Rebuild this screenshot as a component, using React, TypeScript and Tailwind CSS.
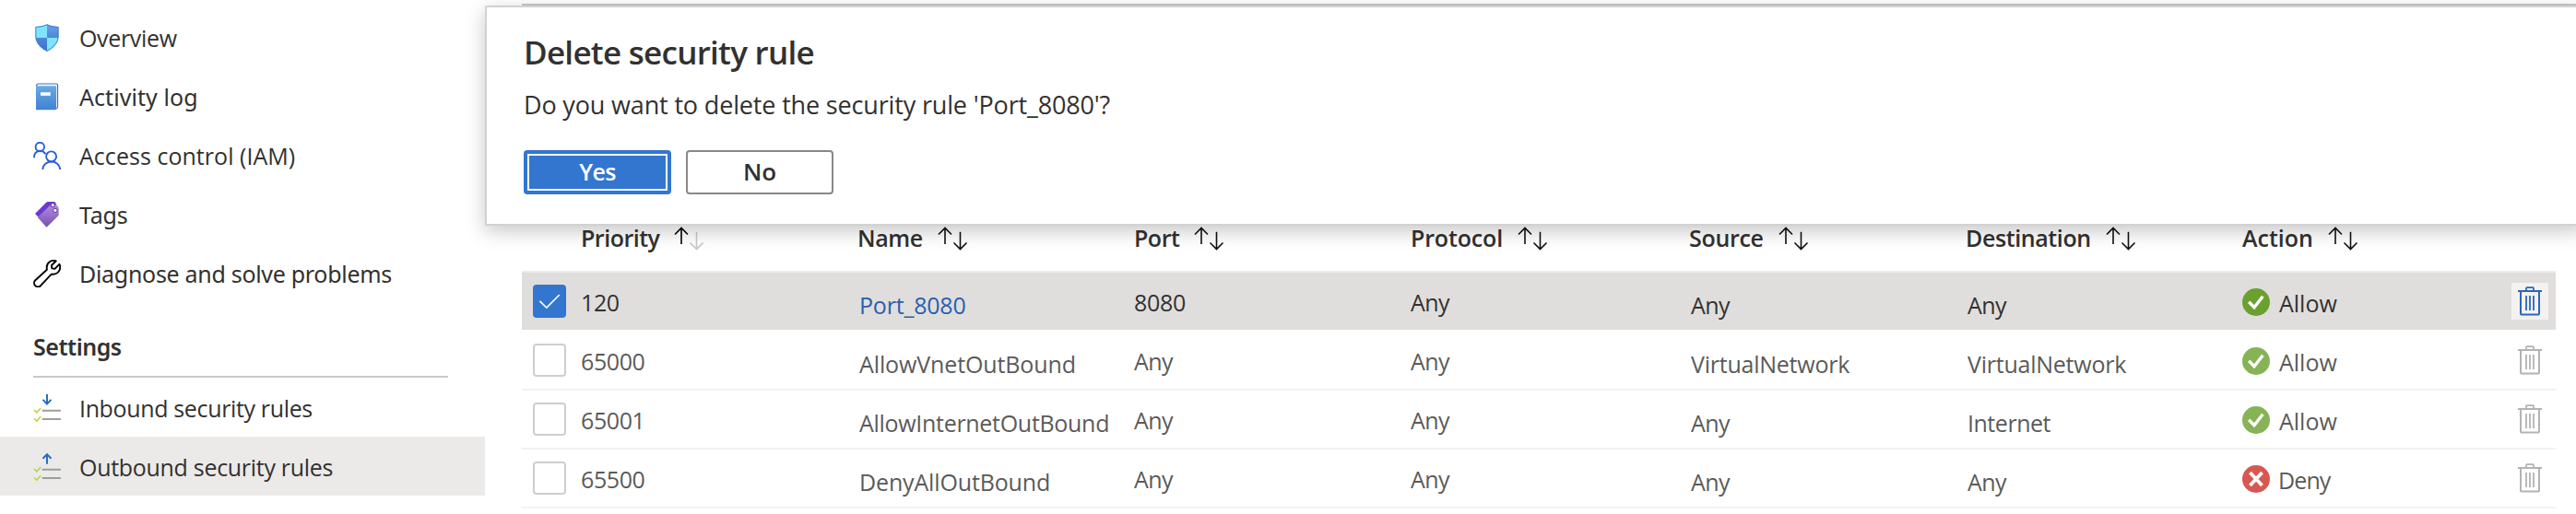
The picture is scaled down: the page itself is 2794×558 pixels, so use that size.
import type { ReactNode } from "react";

const OPEN = "font-['Open_Sans','Noto_Sans',sans-serif]";
const NOTO = "font-['Noto_Sans','Open_Sans',sans-serif]";

function ShieldIcon() {
  return (
    <svg width="30" height="30" viewBox="0 0 30 30">
      <defs>
        <linearGradient id="shieldBase" x1="0" y1="0" x2="0" y2="1">
          <stop offset="0" stopColor="#6f9fe8" />
          <stop offset="0.45" stopColor="#5089d8" />
          <stop offset="1" stopColor="#3572c8" />
        </linearGradient>
        <clipPath id="shieldClip">
          <path d="M15 .3C18.500 2.300 23.500 2.800 27.500 3V13.500C27.500 21.500 20.500 27 15 29.700 9.500 27 2.500 21.500 2.500 13.500V3C6.500 2.800 11.500 2.300 15 .3z" />
        </clipPath>
      </defs>
      <g clipPath="url(#shieldClip)">
        <rect width="30" height="30" fill="url(#shieldBase)" />
        <rect width="15" height="15" fill="#7fe3fc" />
        <rect x="15" y="15" width="15" height="15" fill="#7fe3fc" />
        <path
          d="M15 .3C18.500 2.300 23.500 2.800 27.500 3V13.500C27.500 21.500 20.500 27 15 29.700 9.500 27 2.500 21.500 2.500 13.500V3C6.500 2.800 11.500 2.300 15 .3z"
          fill="none"
          stroke="#3a7bd0"
          strokeWidth="1.600"
        />
      </g>
    </svg>
  );
}

function BookIcon() {
  return (
    <svg width="30" height="30" viewBox="0 0 30 30">
      <defs>
        <linearGradient id="bookCover" x1="0" y1="0" x2="0" y2="1">
          <stop offset="0" stopColor="#68abe8" />
          <stop offset="1" stopColor="#3f82d0" />
        </linearGradient>
      </defs>
      <path d="M3.500 3.500Q3.500 1 6 1H25.200Q26.500 1 26.500 2.200V26Q26.500 27.500 25 28" fill="#fff" stroke="#3f6fae" strokeWidth="1.200" />
      <path d="M3 3.200H24Q25 3.200 25 4.200V28Q25 29.300 23.700 29.300H3z" fill="url(#bookCover)" />
      <rect x="8" y="10.200" width="10.700" height="3.600" fill="#fff" />
    </svg>
  );
}

function PeopleIcon() {
  return (
    <svg width="30" height="30" viewBox="0 0 30 30" fill="none" stroke="#2b5fd9" strokeWidth="1.900">
      <circle cx="7.300" cy="5.500" r="4.700" />
      <path d="M1 17.200C1 8.500 10 8 13.500 13.200" />
      <circle cx="19.600" cy="15.900" r="5.500" />
      <path d="M10.300 30C10.800 18.700 28.700 18.700 29.200 30" />
    </svg>
  );
}

function TagsIcon() {
  return (
    <svg width="30" height="30" viewBox="0 0 30 30">
      <defs>
        <linearGradient id="tagFront" x1="0" y1="0" x2="0" y2="1">
          <stop offset="0" stopColor="#b48be0" />
          <stop offset="1" stopColor="#7450b0" />
        </linearGradient>
      </defs>
      <path d="M2 14 14.200 1.700Q15 1 16 1H22.500Q24 1 24.800 3L25 8 6 18z" fill="#6c39d2" />
      <path d="M4.800 18 18.500 4.700Q19.200 4 20.200 4.200L25.500 4.500Q27.600 6 27.700 8.500V14.800Q27.700 15.900 27 16.600L14.500 28.700z" fill="url(#tagFront)" />
      <circle cx="21.200" cy="4.700" r="2.100" fill="#fff" stroke="#4f2a94" strokeWidth="1" />
      <circle cx="23.900" cy="10.400" r="2.100" fill="#fff" stroke="#5d35a3" strokeWidth="1" />
    </svg>
  );
}

function WrenchIcon() {
  return (
    <svg width="30" height="30" viewBox="0 0 30 30" fill="none" stroke="#000" strokeWidth="1.900" strokeLinejoin="round">
      <path d="M24.800 1.300C19.500-.3 14.700 3.300 14.700 8.300 14.700 9.200 14.700 9.900 14.900 10.800L2.300 22.300A4.100 4.100 0 0 0 8 28.200L19.800 15.600C25.300 16.600 29.500 12.600 29.200 7.600Q29.200 6 28.400 4.800L23.700 9.700 20.300 9.400 20 6z" />
    </svg>
  );
}

function RulesIcon({ up }: { up?: boolean }) {
  return (
    <svg width="30" height="30" viewBox="0 0 30 30" fill="none">
      <path
        d={up ? "M15 11.700V1M10.500 5.800 15 1.200 19.500 5.800" : "M15 0V10.700M10.500 5.900 15 10.500 19.500 5.900"}
        stroke="#2b6cc4"
        strokeWidth="2"
      />
      <path d="M10.400 17.800H29.200M10.400 27.100H29.200" stroke="#9b9f9f" strokeWidth="2" strokeLinecap="round" />
      <path d="M1 17.200 3.900 19.900 8.200 15M1 26.500 3.900 29.200 8.200 24.300" stroke="#b9d545" strokeWidth="1.600" />
    </svg>
  );
}

function SortIcon({ active }: { active?: boolean }) {
  return (
    <svg width="34" height="26" viewBox="0 0 34 26" fill="none" strokeWidth="1.600" className="shrink-0">
      <path d="M24.500 5.800V24.500M17.500 17.500 24.500 24.500 31.500 17.500" stroke={active ? "#c8c8c8" : "#111"} />
      <path d="M8 19V1.500M1 8.500 8 1.500 15 8.500" stroke={active ? "#000" : "#111"} />
    </svg>
  );
}

function TrashIcon({ color }: { color: string }) {
  return (
    <svg width="26" height="32" viewBox="0 0 26 32" fill="none" stroke={color}>
      <path d="M0 5H26" strokeWidth="2" />
      <path d="M9 4.500V2Q9 1.200 9.800 1.200H16.200Q17 1.200 17 2V4.500" strokeWidth="1.800" />
      <path d="M3 5V29Q3 30.600 4.600 30.600H21.400Q23 30.600 23 29V5" strokeWidth="2" />
      <path d="M9 10V26M13 10V26M17 10V26" strokeWidth="1.800" />
    </svg>
  );
}

function StatusIcon({ allow }: { allow: boolean }) {
  return (
    <svg width="30" height="30" viewBox="0 0 30 30" fill="none" className="shrink-0">
      <circle cx="15" cy="15" r="15" fill={allow ? "#6aa12e" : "#d02e28"} />
      <path
        d={allow ? "M7.200 14.800 13 20.700 22.300 8.800" : "M8.500 8 21.500 22M21.500 8 8.500 22"}
        stroke="#fff"
        strokeWidth={allow ? 3.4 : 3.8}
      />
    </svg>
  );
}

function NavItem({ icon, label, type, selected }: { icon: ReactNode; label: string; type: string; selected?: boolean }) {
  return (
    <a className={`flex h-16 items-center pl-9 ${selected ? "bg-[#ebeae8]" : ""}`}>
      <span className="mt-0.5 mr-5">{icon}</span>
      <span className={`pt-0.5 whitespace-nowrap ${type}`}>{label}</span>
    </a>
  );
}

const columns = [
  { label: "Priority", track: "tracking-[-0.5px]", active: true },
  { label: "Name", track: "tracking-[-0.4px]" },
  { label: "Port", track: "tracking-[-0.5px]" },
  { label: "Protocol", track: "tracking-[-0.15px]" },
  { label: "Source", track: "tracking-[-0.3px]" },
  { label: "Destination", track: "tracking-[-0.4px]" },
  { label: "Action", track: "" },
];

const ANY = "tracking-[-0.6px]";
const VNET = "tracking-[-0.24px]";

const rules = [
  { priority: "120", name: "Port_8080", nameTrack: "tracking-[-0.2px]", port: "8080", portTrack: "tracking-[-0.27px]", source: "Any", sourceTrack: ANY, dest: "Any", destTrack: ANY, allow: true, selected: true },
  { priority: "65000", name: "AllowVnetOutBound", nameTrack: "tracking-[-0.12px]", port: "Any", portTrack: ANY, source: "VirtualNetwork", sourceTrack: VNET, dest: "VirtualNetwork", destTrack: VNET, allow: true, selected: false },
  { priority: "65001", name: "AllowInternetOutBound", nameTrack: "tracking-[-0.3px]", port: "Any", portTrack: ANY, source: "Any", sourceTrack: ANY, dest: "Internet", destTrack: "tracking-[-0.47px]", allow: true, selected: false },
  { priority: "65500", name: "DenyAllOutBound", nameTrack: "tracking-[-0.15px]", port: "Any", portTrack: ANY, source: "Any", sourceTrack: ANY, dest: "Any", destTrack: ANY, allow: false, selected: false },
];

const GRID = "grid grid-cols-[64px_300px_300px_300px_302px_300px_300px_292px_48px]";

export default function App() {
  return (
    <div className={`relative flex h-[558px] w-full overflow-hidden bg-white text-[25px] leading-[34px] text-[#323130] ${OPEN}`}>
      <nav className="w-[526px] shrink-0 pt-2">
        <NavItem icon={<ShieldIcon />} label="Overview" type="tracking-[-0.33px]" />
        <NavItem icon={<BookIcon />} label="Activity log" type={`tracking-[0.07px] ${NOTO}`} />
        <NavItem icon={<PeopleIcon />} label="Access control (IAM)" type="tracking-[0.04px]" />
        <NavItem icon={<TagsIcon />} label="Tags" type={`tracking-[-0.2px] ${NOTO}`} />
        <NavItem icon={<WrenchIcon />} label="Diagnose and solve problems" type={`tracking-[-0.3px] ${NOTO}`} />
        <h2 className={`mr-10 ml-9 h-[82px] border-b-2 border-[#c8c8c8] pt-[31px] font-semibold tracking-[-0.5px] ${NOTO}`}>Settings</h2>
        <NavItem icon={<RulesIcon />} label="Inbound security rules" type="tracking-[-0.35px]" />
        <NavItem icon={<RulesIcon up />} label="Outbound security rules" type="tracking-[-0.3px]" selected />
      </nav>

      <main className="ml-10 w-[2206px] shrink-0 pt-1">
        <div className="-mr-[22px] h-[226px] border-t-2 border-[#c8c8c8]" />
        <div className={`h-16 font-semibold ${GRID}`}>
          <span />
          {columns.map((c) => (
            <div key={c.label} className="flex items-start pt-[11px]">
              <span className={`mr-4 ${c.track}`}>{c.label}</span>
              <span className="mt-[5px]">
                <SortIcon active={c.active} />
              </span>
            </div>
          ))}
        </div>

        {rules.map((r, i) => (
          <div
            key={r.priority}
            className={`h-16 items-center ${GRID} ${r.selected ? "border-t-2 border-[#ebebea] bg-[#e0dedc]" : i === 1 ? "pt-0.5" : "border-t-2 border-[#f3f2f1]"}`}
          >
            <span
              className={`ml-3 flex size-9 items-center justify-center rounded ${r.selected ? "bg-[#3276cf]" : "border-2 border-[#cfcecd] bg-white"}`}
            >
              {r.selected && (
                <svg width="24" height="18" viewBox="0 0 24 18" fill="none" stroke="#fff" strokeWidth="1.700">
                  <path d="M1.500 8.800 8.800 16.100 22.800 2" />
                </svg>
              )}
            </span>
            <span className={`pt-0.5 tracking-[-0.4px] ${r.selected ? "" : "opacity-80"}`}>{r.priority}</span>
            <span className={`pt-[7px] pl-0.5 whitespace-nowrap ${r.nameTrack} ${r.selected ? "text-[#2860ae]" : "opacity-80"}`}>{r.name}</span>
            <span className={`pt-0.5 ${r.portTrack} ${r.selected ? "" : "opacity-80"}`}>{r.port}</span>
            <span className={`pt-0.5 ${ANY} ${r.selected ? "" : "opacity-80"}`}>Any</span>
            <span className={`pt-[7px] pl-0.5 ${r.sourceTrack} ${r.selected ? "" : "opacity-80"}`}>{r.source}</span>
            <span className={`pt-[7px] pl-0.5 ${r.destTrack} ${r.selected ? "" : "opacity-80"}`}>{r.dest}</span>
            <span className={`flex items-center pt-0.5 ${r.selected ? "" : "opacity-80"}`}>
              <StatusIcon allow={r.allow} />
              <span className={`pt-0.5 pl-2.5 ${r.allow ? "" : "-ml-px tracking-[-0.9px]"}`}>{r.allow ? "Allow" : "Deny"}</span>
            </span>
            <span className={`flex size-10 items-center justify-center ${r.selected ? "bg-[#f3f2f1]" : ""}`}>
              <TrashIcon color={r.selected ? "#2b67b8" : "#b3b3b3"} />
            </span>
          </div>
        ))}
        <div className="h-0.5 bg-[#f3f2f1]" />
      </main>

      <section className="absolute top-1.5 -right-2 left-[526px] h-[239px] border-2 border-[#d2d2d2] bg-white pl-10 shadow-[0_6px_20px_rgba(0,0,0,0.22)]">
        <h1 className="pt-6 text-[35px] leading-[50px] font-semibold tracking-[-0.73px]">Delete security rule</h1>
        <p className="pt-3 text-[27px] leading-[40px] tracking-[-0.16px]">Do you want to delete the security rule 'Port_8080'?</p>
        <div className="mt-[29px] flex gap-4 font-semibold">
          <button className="flex h-12 w-40 rounded bg-[#3276cf] p-1 text-white">
            <span className="flex h-full w-full items-center justify-center border-2 border-white pb-0.5 tracking-[-0.7px]">Yes</span>
          </button>
          <button className="flex h-12 w-40 items-center justify-center rounded border-2 border-[#8a8886] bg-white pb-0.5 text-[26px]">No</button>
        </div>
      </section>
    </div>
  );
}
